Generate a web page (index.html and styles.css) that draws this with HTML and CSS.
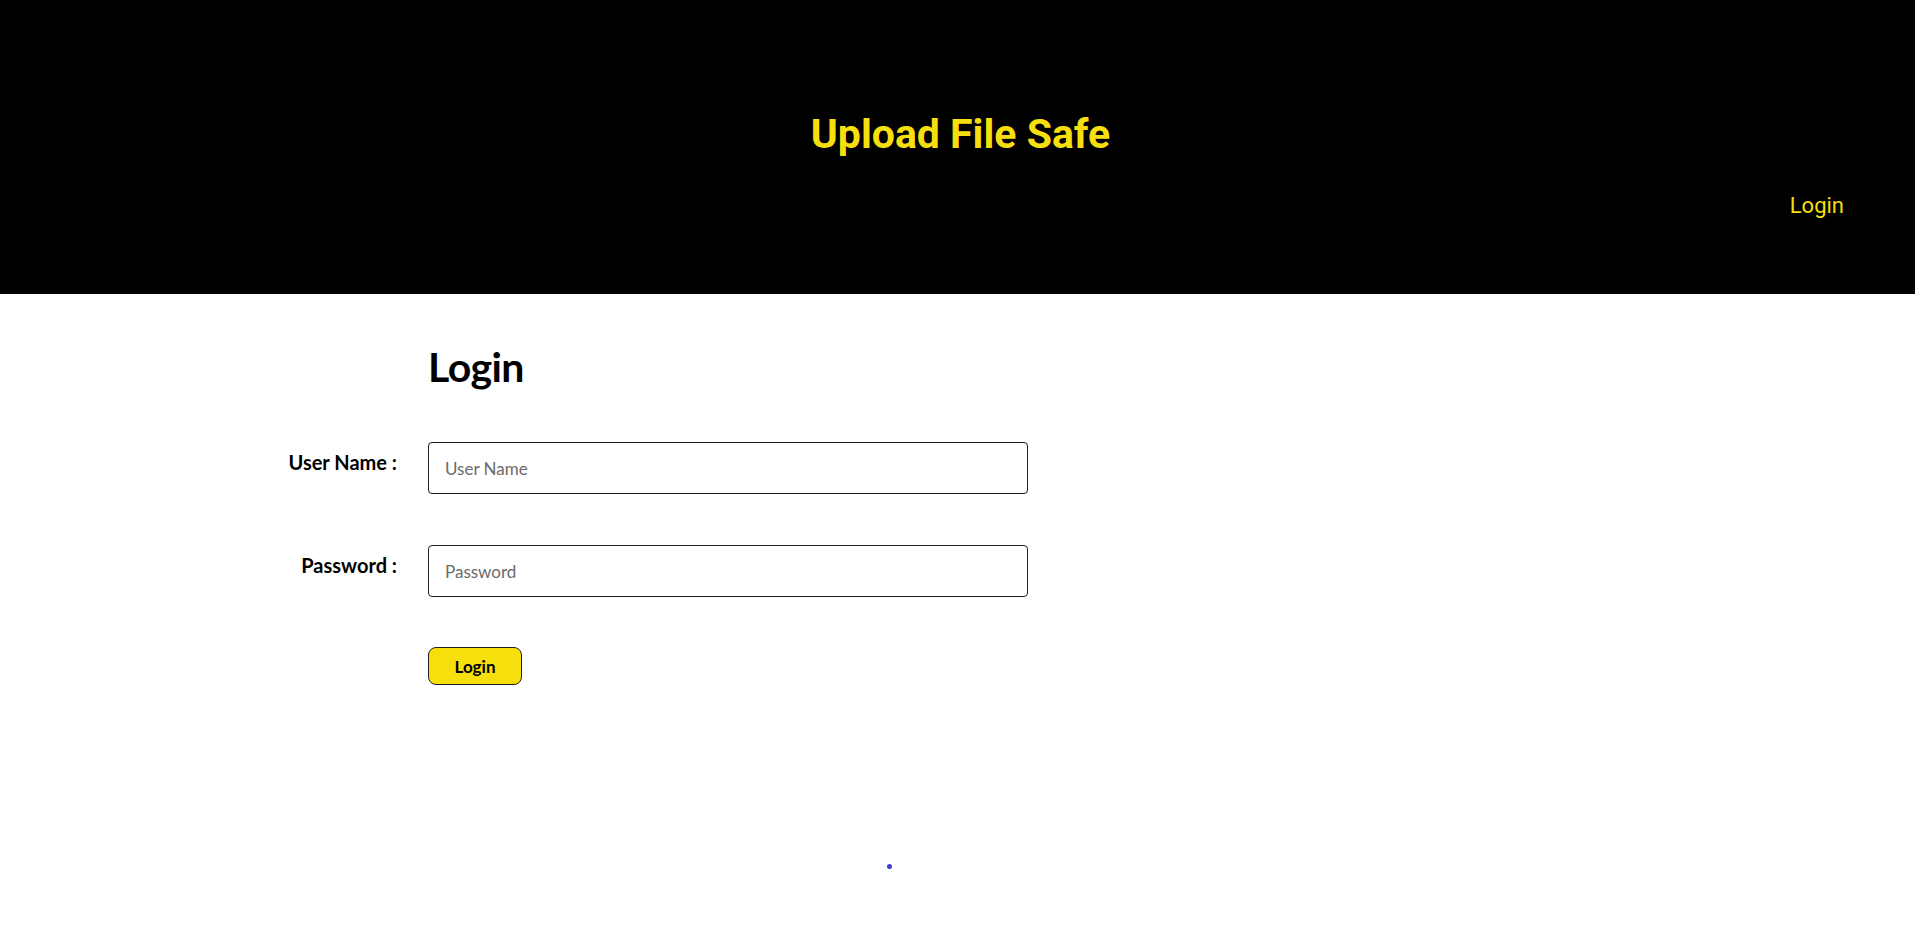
FILE: index.html
```html
<!DOCTYPE html>
<html lang="en">
<head>
<meta charset="utf-8">
<title>Upload File Safe</title>
<link rel="stylesheet" href="styles.css">
</head>
<body>
<header class="site-header">
  <h1 class="brand">Upload File Safe</h1>
  <nav class="nav">
    <a class="nav-link" href="#">Login</a>
  </nav>
</header>
<main class="content">
  <h2 class="page-title">Login</h2>
  <form class="login-form">
    <label class="field-label" for="user">User Name :</label>
    <input class="field-input" id="user" type="text" placeholder="User Name">
    <label class="field-label" for="pass">Password :</label>
    <input class="field-input" id="pass" type="password" placeholder="Password">
    <span class="spacer"></span>
    <div class="actions"><button class="btn" type="button">Login</button></div>
  </form>
  <div class="dot-row"><span class="dot"></span></div>
</main>
</body>
</html>
```
FILE: styles.css
```css
html, body {
  margin: 0;
  padding: 0;
  background: #ffffff;
  font-family: Lato, "Liberation Sans", sans-serif;
}
.site-header {
  background: #000000;
  height: 294px;
  box-sizing: border-box;
  padding-top: 110px;
  display: flex;
  flex-direction: column;
}
.brand {
  margin: 0;
  text-align: center;
  font-family: Roboto, "Liberation Sans", sans-serif;
  font-weight: 700;
  font-size: 41px;
  line-height: 48px;
  color: #f7df0e;
  padding-left: 6px;
}
.nav {
  display: flex;
  justify-content: flex-end;
  padding-right: 71px;
  margin-top: 35px;
}
.nav-link {
  font-family: Roboto, "Liberation Sans", sans-serif;
  font-size: 22px;
  line-height: 26px;
  color: #f7df0e;
  text-decoration: none;
}
.content {
  padding-left: 428px;
}
.page-title {
  margin: 0;
  padding-top: 47px;
  font-size: 41px;
  line-height: 52px;
  letter-spacing: -0.6px;
  font-weight: 700;
  color: #000;
}
.login-form {
  margin-left: -428px;
  margin-top: 49px;
  display: grid;
  grid-template-columns: 397px 600px;
  column-gap: 31px;
  row-gap: 51px;
}
.field-label {
  text-align: right;
  font-weight: 700;
  font-size: 20px;
  line-height: 24px;
  padding-top: 8px;
  color: #000;
}
.field-input {
  box-sizing: border-box;
  height: 52px;
  width: 600px;
  margin: 0;
  border: 1px solid #1f1f1f;
  border-radius: 4px;
  padding: 0 16px;
  font-family: Lato, "Liberation Sans", sans-serif;
  font-size: 17px;
  color: #000;
  outline: none;
}
.field-input::placeholder {
  color: #6b6b6b;
}
.actions {
  display: flex;
  margin-top: -1px;
}
.btn {
  box-sizing: border-box;
  width: 94px;
  height: 38px;
  background: #f7df0e;
  border: 1px solid #1f1f1f;
  border-radius: 8px;
  font-family: Lato, "Liberation Sans", sans-serif;
  font-weight: 700;
  font-size: 17px;
  color: #000;
  padding: 0;
  cursor: pointer;
}
.dot-row {
  margin-left: -428px;
  display: flex;
  padding-top: 179px;
  padding-left: 887px;
}
.dot {
  width: 5px;
  height: 5px;
  border-radius: 50%;
  background: #3d3dd6;
}
```
